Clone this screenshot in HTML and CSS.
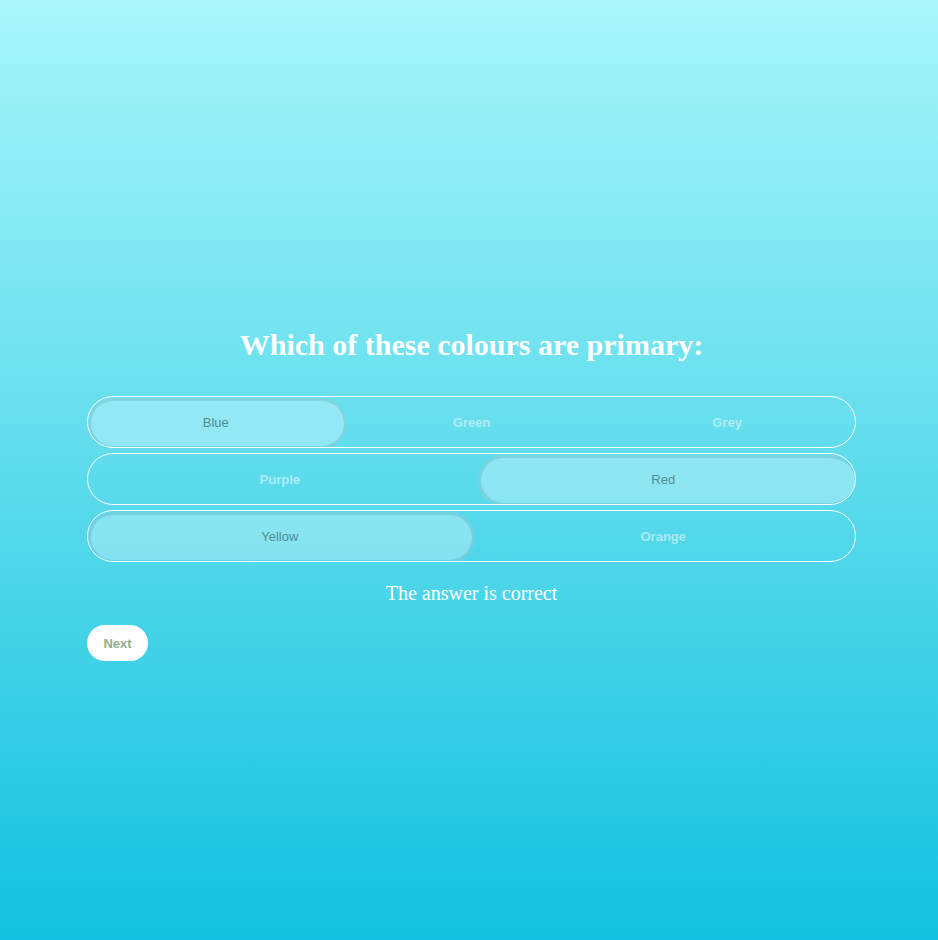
FILE: index.html
```html
<!DOCTYPE html>
<html>
<head>
<meta charset="utf-8">
<link rel="stylesheet" href="styles.css">
</head>
<body>
<main class="quiz">
  <h1 class="question">Which of these colours are primary:</h1>
  <div class="options">
    <div class="row">
      <div class="option selected">Blue</div>
      <div class="option">Green</div>
      <div class="option">Grey</div>
    </div>
    <div class="row">
      <div class="option">Purple</div>
      <div class="option selected last">Red</div>
    </div>
    <div class="row">
      <div class="option selected">Yellow</div>
      <div class="option">Orange</div>
    </div>
  </div>
  <p class="result">The answer is correct</p>
  <button class="next">Next</button>
</main>
</body>
</html>
```
FILE: styles.css
```css
html, body {
  margin: 0;
  padding: 0;
  height: 100%;
}
body {
  background: linear-gradient(to bottom, #a9f6fa 0%, #12c1df 100%);
  font-family: "Liberation Serif", "Times New Roman", serif;
  overflow: hidden;
}
.quiz {
  width: 769px;
  margin-left: 87px;
  padding-top: 327px;
}
.question {
  margin: 0;
  text-align: center;
  color: #fff;
  font-size: 30px;
  font-weight: bold;
  line-height: 36px;
}
.options {
  margin-top: 33px;
  display: flex;
  flex-direction: column;
  gap: 5px;
}
.row {
  display: flex;
  height: 50px;
  border: 1px solid #fff;
  border-radius: 26px;
  overflow: hidden;
}
.option {
  position: relative;
  z-index: 0;
  flex: 1 1 0;
  display: flex;
  align-items: center;
  justify-content: center;
  font-family: "Liberation Sans", Arial, sans-serif;
  font-size: 13px;
  font-weight: bold;
  color: rgba(255, 255, 255, 0.5);
}
.option.selected {
  font-weight: normal;
  color: #538a93;
}
.option.selected::before {
  content: "";
  position: absolute;
  top: 1px;
  bottom: -2px;
  left: 0;
  right: -3px;
  z-index: -1;
  background: rgba(255, 255, 255, 0.3);
  border: 3px solid rgba(0, 90, 110, 0.14);
  border-radius: 26px;
}
.option.selected.last::before {
  left: 6px;
  right: 0;
  border-right: 0;
}
.result {
  margin: 18px 0 0;
  text-align: center;
  color: #fff;
  font-size: 20px;
  line-height: 26px;
}
.next {
  margin-top: 19px;
  width: 61px;
  height: 36px;
  border: 0;
  border-radius: 18px;
  background: #fff;
  color: #8fae8c;
  font-family: "Liberation Sans", Arial, sans-serif;
  font-size: 13px;
  font-weight: bold;
  padding: 0;
  cursor: pointer;
}
```
